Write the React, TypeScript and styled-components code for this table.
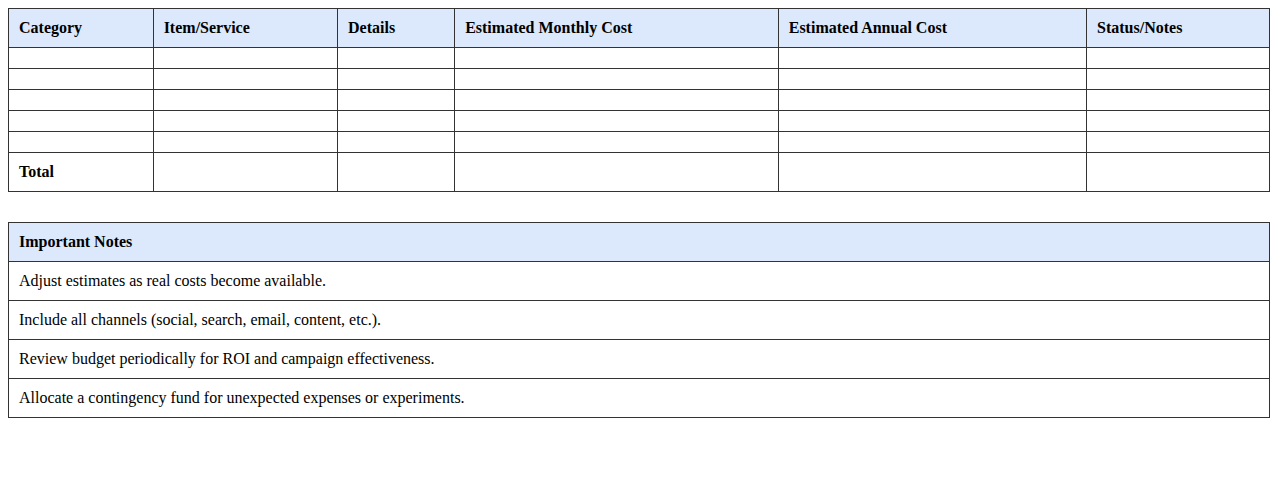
import styled, { createGlobalStyle } from "styled-components";

const GlobalStyle = createGlobalStyle`
  body {
    margin: 8px;
    font-family: "Liberation Serif", "Times New Roman", serif;
    background: #ffffff;
    color: #000000;
  }
`;

const HEADERS = [
  "Category",
  "Item/Service",
  "Details",
  "Estimated Monthly Cost",
  "Estimated Annual Cost",
  "Status/Notes",
];

const NOTES = [
  "Adjust estimates as real costs become available.",
  "Include all channels (social, search, email, content, etc.).",
  "Review budget periodically for ROI and campaign effectiveness.",
  "Allocate a contingency fund for unexpected expenses or experiments.",
];

const Table = styled.table<{ $gap?: number }>`
  width: 100%;
  border-collapse: collapse;
  margin-bottom: ${(p) => p.$gap ?? 0}px;
  font-size: 16px;
`;

const Th = styled.th`
  border: 1px solid #333333;
  background-color: #dce8fb;
  padding: 10px;
  text-align: left;
  font-weight: bold;
`;

const Td = styled.td<{ $bold?: boolean }>`
  border: 1px solid #333333;
  padding: 10px;
  text-align: left;
  font-weight: ${(p) => (p.$bold ? "bold" : "normal")};
`;

const App = () => {
  return (
    <>
      <GlobalStyle />
      <Table $gap={30}>
        <thead>
          <tr>
            {HEADERS.map((h) => (
              <Th key={h}>{h}</Th>
            ))}
          </tr>
        </thead>
        <tbody>
          {[0, 1, 2, 3, 4].map((r) => (
            <tr key={r}>
              {HEADERS.map((h) => (
                <Td key={h}></Td>
              ))}
            </tr>
          ))}
          <tr>
            <Td $bold>Total</Td>
            <Td></Td>
            <Td></Td>
            <Td></Td>
            <Td></Td>
            <Td></Td>
          </tr>
        </tbody>
      </Table>
      <Table>
        <thead>
          <tr>
            <Th>Important Notes</Th>
          </tr>
        </thead>
        <tbody>
          {NOTES.map((n) => (
            <tr key={n}>
              <Td>{n}</Td>
            </tr>
          ))}
        </tbody>
      </Table>
    </>
  );
};

export default App;
